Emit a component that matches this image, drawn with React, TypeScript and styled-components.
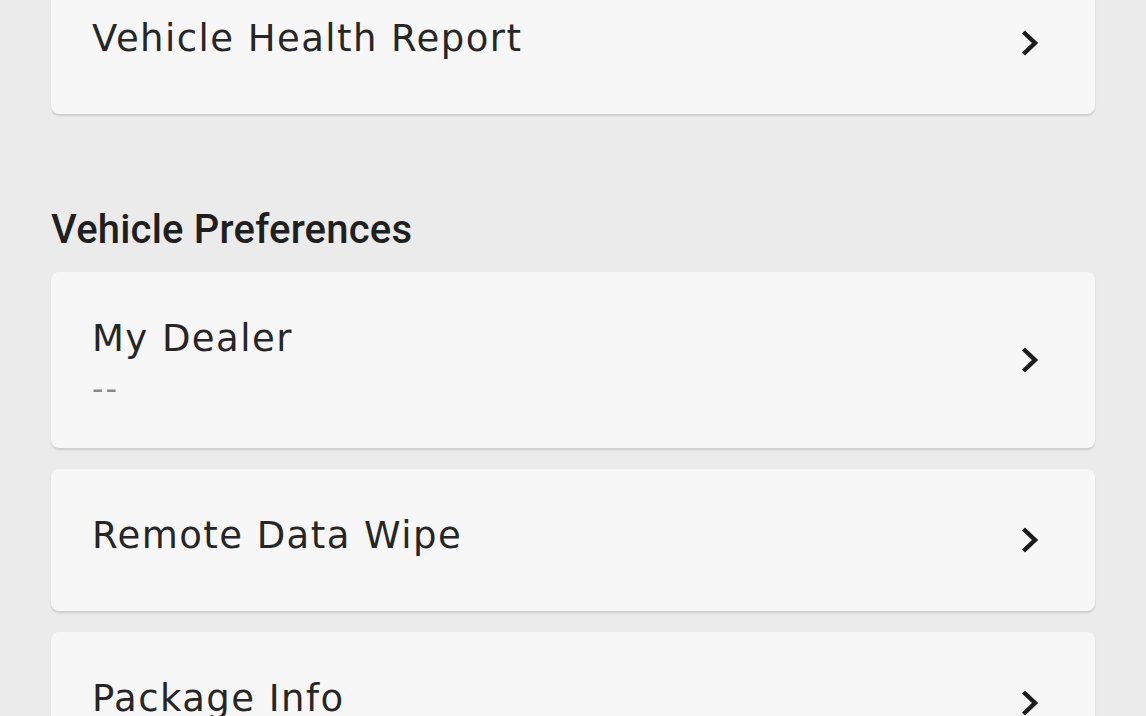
import React from "react";
import styled, { createGlobalStyle } from "styled-components";

const GlobalStyle = createGlobalStyle`
  html, body {
    margin: 0;
    padding: 0;
    background: #ebebeb;
    overflow: hidden;
  }
`;

const Page = styled.div`
  width: 1146px;
  height: 716px;
  padding: 0 51px;
  box-sizing: border-box;
  overflow: hidden;
`;

const List = styled.div`
  display: flex;
  flex-direction: column;
  margin-top: -28px;
`;

const Card = styled.div<{ gap?: number }>`
  display: flex;
  align-items: center;
  justify-content: space-between;
  box-sizing: border-box;
  padding: 45px 56px 53px 41px;
  margin-bottom: ${({ gap }) => (gap !== undefined ? gap : 21)}px;
  background: #f7f7f7;
  border-radius: 8px;
  box-shadow: 0 2px 2px rgba(0, 0, 0, 0.13);
`;

const Texts = styled.div`
  display: flex;
  flex-direction: column;
`;

const Title = styled.span`
  font-family: "DejaVu Sans", sans-serif;
  font-size: 37px;
  line-height: 44px;
  color: #262626;
  letter-spacing: 1.45px;
`;

const Subtitle = styled.span`
  font-family: "DejaVu Sans", sans-serif;
  font-size: 32px;
  line-height: 11px;
  margin-top: 23px;
  letter-spacing: 2px;
  color: #8a8a8a;
`;

const SectionHeading = styled.h2`
  margin: 94px 0 20px;
  font-family: Roboto, sans-serif;
  font-weight: 500;
  font-size: 40px;
  line-height: 44px;
  letter-spacing: 0.2px;
  color: #1f1f1f;
`;

const Chevron = styled.svg`
  flex: none;
  width: 19px;
  height: 30px;
  margin-top: 8px;
  color: #1c1c1c;
`;

const Arrow = () => (
  <Chevron viewBox="0 0 19 30" aria-hidden="true">
    <polyline
      points="3.5,4 15,15 3.5,26"
      fill="none"
      stroke="currentColor"
      strokeWidth="4.4"
      strokeLinejoin="miter"
    />
  </Chevron>
);

interface Item {
  title: string;
  subtitle?: string;
}

const Row = ({ title, subtitle, gap }: Item & { gap?: number }) => (
  <Card gap={gap}>
    <Texts>
      <Title>{title}</Title>
      {subtitle && <Subtitle>{subtitle}</Subtitle>}
    </Texts>
    <Arrow />
  </Card>
);

const preferences: Item[] = [
  { title: "My Dealer", subtitle: "--" },
  { title: "Remote Data Wipe" },
  { title: "Package Info" },
];

export default function App() {
  return (
    <>
      <GlobalStyle />
      <Page>
        <List>
          <Row title="Vehicle Health Report" gap={0} />
          <SectionHeading>Vehicle Preferences</SectionHeading>
          {preferences.map((p) => (
            <Row key={p.title} title={p.title} subtitle={p.subtitle} />
          ))}
        </List>
      </Page>
    </>
  );
}
